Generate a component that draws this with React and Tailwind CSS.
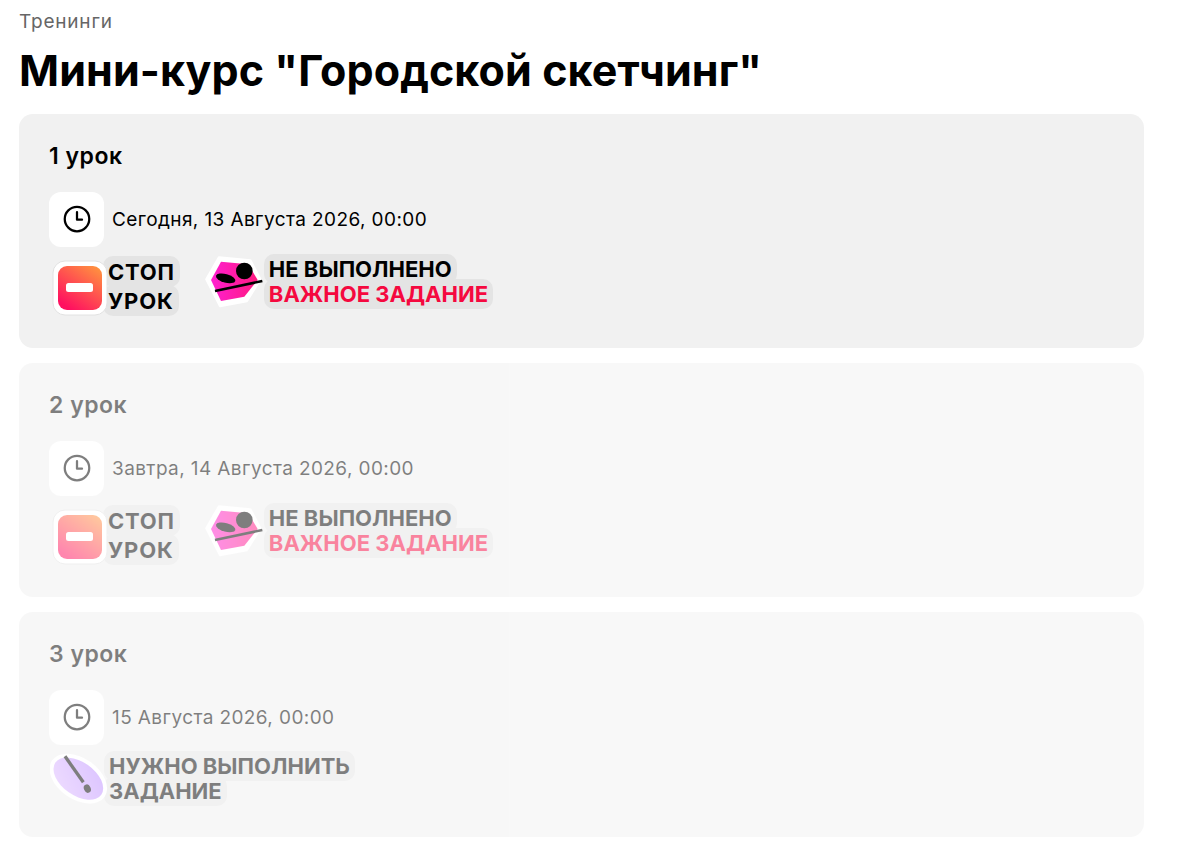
import React from 'react';

const font = { fontFamily: 'Inter, "Noto Sans", sans-serif' };

const ClockIcon = () => (
  <svg width="30" height="30" viewBox="0 0 24 24" fill="none" stroke="#000" strokeWidth="1.8" strokeLinecap="round" strokeLinejoin="round" className="-mt-px">
    <circle cx="12" cy="12" r="9.8" />
    <path d="M12 6.5V12.5H16" />
  </svg>
);

const StopIcon = () => (
  <svg width="56" height="56" viewBox="0 0 56 56" className="shrink-0 relative z-10 mt-[3px]">
    <defs>
      <linearGradient id="stopGrad" x1="1" y1="0" x2="0.3" y2="1">
        <stop offset="0" stopColor="#ff9a3d" />
        <stop offset="1" stopColor="#ff1060" />
      </linearGradient>
    </defs>
    <rect x="1" y="1" width="54" height="54" rx="12" fill="#fff" stroke="#e2e2e2" strokeWidth="1" />
    <rect x="6" y="6" width="44" height="44" rx="9" fill="url(#stopGrad)" />
    <rect x="14" y="23" width="27" height="9" rx="2.5" fill="#fff" />
  </svg>
);

const FaceIcon = () => (
  <svg width="58" height="52" viewBox="0 0 174 156" className="shrink-0 relative z-10 mt-[2px]">
    <defs>
      <linearGradient id="faceGrad" x1="0" y1="0" x2="1" y2="0">
        <stop offset="0" stopColor="#ff1fd0" />
        <stop offset="1" stopColor="#ff1a80" />
      </linearGradient>
    </defs>
    <path d="M42 4L136 13L166 70L126 135L45 150L4 70Z" fill="#fff" stroke="#fff" strokeWidth="7" strokeLinejoin="round" />
    <path d="M48 17L130 25L158 72L118 122L48 135L18 72Z" fill="url(#faceGrad)" />
    <ellipse cx="62" cy="67" rx="30" ry="13" transform="rotate(15 62 67)" fill="#000" />
    <circle cx="118" cy="45" r="25" fill="#000" />
    <path d="M30 105L172 75" stroke="#000" strokeWidth="8" />
  </svg>
);

const BrushIcon = () => (
  <svg width="58" height="52" viewBox="0 0 174 156" className="shrink-0 relative z-10 ml-px">
    <defs>
      <linearGradient id="brushGrad" x1="1" y1="0" x2="0" y2="1">
        <stop offset="0" stopColor="#b888ff" />
        <stop offset="1" stopColor="#e0bcff" />
      </linearGradient>
    </defs>
    <ellipse cx="85" cy="77" rx="96" ry="62" transform="rotate(35 85 77)" fill="#fff" />
    <ellipse cx="85" cy="77" rx="84" ry="50" transform="rotate(35 85 77)" fill="url(#brushGrad)" />
    <path d="M45 10L100 88" stroke="#000" strokeWidth="10" />
    <ellipse cx="112" cy="107" rx="10" ry="13" transform="rotate(-25 112 107)" fill="#000" />
  </svg>
);

const Label = ({ lines, leading, py, cls }) => (
  <div className={`font-bold text-[22px] ${leading} ${cls}`}>
    {lines.map((l, i) => (
      <React.Fragment key={i}>
        <span className={`bg-[#e4e4e4] rounded-[10px] px-[5px] ${py} ${l.red ? 'text-[#f5093f]' : 'text-black'}`}>{l.text}</span>
        {i < lines.length - 1 && <br />}
      </React.Fragment>
    ))}
  </div>
);

const lessons = [
  {
    id: 1, title: '1 урок', date: 'Сегодня, 13 Августа 2026, 00:00', active: true,
  },
  {
    id: 2, title: '2 урок', date: 'Завтра, 14 Августа 2026, 00:00',
  },
  {
    id: 3, title: '3 урок', date: '15 Августа 2026, 00:00', todo: true,
  },
];

export default function App() {
  return (
    <div className="bg-white min-h-[860px] pl-[19px] w-[1144px] text-black" style={font}>
      <div className="text-[19px] leading-[22px] tracking-[0.8px] text-[#666] pt-[11px]">Тренинги</div>
      <h1 className="text-[43px] leading-[52px] font-bold tracking-[0.1px] mt-[11px] mb-[18px]">Мини-курс "Городской скетчинг"</h1>
      <div className="flex flex-col gap-[15px]">
        {lessons.map(l => (
          <div key={l.id} className={`bg-[#f1f1f1] rounded-[14px] px-[30px] pt-[28px] pb-[32px] ${l.active ? '' : 'opacity-50'}`}>
            <h3 className="text-[23px] leading-[28px] font-semibold tracking-[0.5px]">{l.title}</h3>
            <div className="flex items-center gap-2 mt-[22px]">
              <div className="w-[55px] h-[55px] bg-white rounded-xl flex items-center justify-center"><ClockIcon /></div>
              <span className="text-[19px] tracking-[0.4px] pt-[2px]">{l.date}</span>
            </div>
            {l.todo ? (
              <div className="flex items-center mt-[8px]">
                <BrushIcon />
                <Label lines={[{ text: 'НУЖНО ВЫПОЛНИТЬ' }, { text: 'ЗАДАНИЕ' }]} leading="leading-[25px]" py="py-[2px]" cls="-ml-[4px]" />
              </div>
            ) : (
              <div className="flex items-start mt-[7px] ml-[3px]">
                <div className="flex items-start mt-[3px]">
                  <StopIcon />
                  <Label lines={[{ text: 'СТОП' }, { text: 'УРОК' }]} leading="leading-[29px]" py="py-[2.5px]" cls="-ml-[5px] tracking-[0.8px]" />
                </div>
                <div className="flex items-start ml-[25px]">
                  <FaceIcon />
                  <Label lines={[{ text: 'НЕ ВЫПОЛНЕНО' }, { text: 'ВАЖНОЕ ЗАДАНИЕ', red: true }]} leading="leading-[25px]" py="py-[2px]" cls="ml-[1px] mt-[2.5px]" />
                </div>
              </div>
            )}
          </div>
        ))}
      </div>
    </div>
  );
}
